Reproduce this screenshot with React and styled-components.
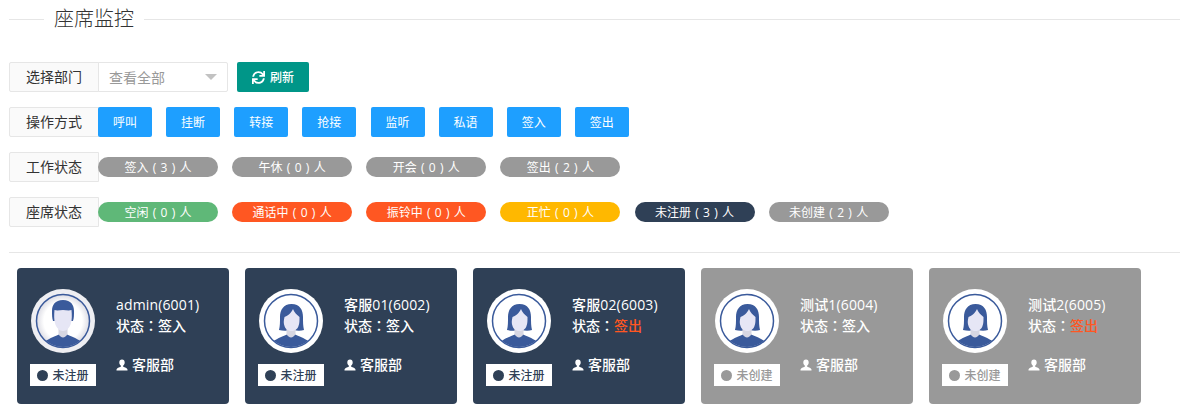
import React from 'react'
import styled, { createGlobalStyle } from 'styled-components'
import { FaSync } from 'react-icons/fa'

const GlobalStyle = createGlobalStyle`
    html, body {
        margin: 0;
        padding: 0;
        background: #fff;
        font-family: "Open Sans", "Noto Sans CJK SC", sans-serif;
        color: #333;
    }
`

const Page = styled.div`
    width: 1180px;
    height: 418px;
    padding-left: 9px;
    box-sizing: border-box;
    overflow: hidden;
`

const TitleBar = styled.div`
    display: flex;
    align-items: center;
    gap: 10px;
    height: 38px;
    margin-bottom: 24px;

    &::before {
        content: '';
        width: 35px;
        height: 1px;
        background: #e6e6e6;
    }

    &::after {
        content: '';
        flex: 1;
        height: 1px;
        background: #e6e6e6;
    }
`

const Title = styled.h2`
    margin: 0;
    font-size: 20px;
    font-weight: 300;
    line-height: 28px;
    color: #333;
`

const Row = styled.div`
    display: flex;
    align-items: center;
    height: 30px;
    margin-bottom: 15px;
`

const Label = styled.div`
    width: 90px;
    height: 30px;
    box-sizing: border-box;
    border: 1px solid #e6e6e6;
    border-radius: 2px 0 0 2px;
    background: #fafafa;
    font-size: 14px;
    line-height: 27px;
    text-align: center;
    color: #333;
    flex: none;
`

const Select = styled.div`
    display: flex;
    align-items: center;
    justify-content: space-between;
    width: 130px;
    height: 30px;
    box-sizing: border-box;
    margin-left: -1px;
    padding: 0 10px;
    border: 1px solid #e6e6e6;
    border-radius: 0 2px 2px 0;
    font-size: 14px;
    color: #999;
`

const Caret = styled.span`
    width: 0;
    height: 0;
    border-style: solid;
    border-width: 6px 6px 0;
    border-color: #c2c2c2 transparent transparent;
`

const Refresh = styled.button`
    display: flex;
    align-items: center;
    justify-content: center;
    gap: 5px;
    width: 72px;
    height: 30px;
    margin-left: 9px;
    padding: 0;
    border: 0;
    border-radius: 2px;
    background: #009688;
    color: #fff;
    font-family: inherit;
    font-size: 12px;
    font-weight: 500;
`

const Actions = styled.div`
    display: flex;
    gap: 14.14px;
    margin-left: -1px;
`

const ActionButton = styled.button`
    width: 54px;
    height: 30px;
    padding: 0;
    border: 0;
    border-radius: 2px;
    background: #1e9fff;
    color: #fff;
    font-family: inherit;
    font-size: 12px;
`

const Pills = styled.div`
    display: flex;
    gap: 14.14px;
    margin-left: -1px;
`

const Pill = styled.div`
    width: 120px;
    height: 20px;
    border-radius: 10px;
    background: ${p => p.$color};
    color: #fff;
    font-size: 12px;
    line-height: 21px;
    word-spacing: 1.2px;
    text-align: center;
`

const Divider = styled.hr`
    height: 1px;
    margin: 25px 0 15px;
    border: 0;
    background: #e6e6e6;
`

const Cards = styled.div`
    display: flex;
    gap: 16px;
    padding-left: 8px;
`

const Card = styled.div`
    display: flex;
    width: 212px;
    height: 136px;
    box-sizing: border-box;
    padding: 21px 0 0 13px;
    border-radius: 4px;
    background: ${p => (p.$off ? '#999999' : '#2f4056')};
    color: #fff;
`

const Side = styled.div`
    display: flex;
    flex-direction: column;
    align-items: center;
    width: 66px;
    flex: none;
`

const AvatarRing = styled.svg`
    display: block;
    width: 64px;
    height: 64px;
    margin-bottom: 11px;
`

const Badge = styled.div`
    display: flex;
    align-items: center;
    justify-content: center;
    gap: 4px;
    width: 66px;
    height: 22px;
    background: #fff;
    color: ${p => (p.$off ? '#999999' : '#2f4056')};
    font-size: 12px;
    font-weight: 500;
`

const Dot = styled.span`
    width: 11px;
    height: 11px;
    border-radius: 50%;
    background: currentColor;
`

const Info = styled.div`
    display: flex;
    flex-direction: column;
    margin-left: 20px;
    padding-top: 5px;
    font-size: 14px;
    font-weight: 500;
    line-height: 21px;
`

const Name = styled.div`
    letter-spacing: 0.15px;
`

const Colon = styled.span`
    font-family: "Noto Sans CJK TC", sans-serif;
`

const Warn = styled.span`
    color: #ff5722;
`

const Dept = styled.div`
    display: flex;
    align-items: center;
    gap: 4px;
    margin-top: 18px;
`

const Avatar = ({ female, soft }) => (
    <AvatarRing viewBox="0 0 64 64">
        <defs>
            <clipPath id="inner">
                <circle cx="32" cy="32" r="26" />
            </clipPath>
            <radialGradient id="softFill" cx="50%" cy="50%" r="50%">
                <stop offset="72%" stopColor="#fff" />
                <stop offset="100%" stopColor="#dcdce4" />
            </radialGradient>
        </defs>
        <circle cx="32" cy="32" r="32" fill={soft ? '#eeeef2' : '#fff'} />
        <circle cx="32" cy="32" r="26.5" fill={soft ? 'url(#softFill)' : '#fff'} stroke="#3a5a9b" strokeWidth="1.5" />
        <g clipPath="url(#inner)">
            {female ? (
                <path
                    d="M32.500 15c-8 0-11.500 6-11.500 13 0 5 0 9-1 13 4 1 8 1 10 0h5c3 1 7 1 10 0-1-4-1-8-1-13 0-7-3-13-11.500-13z"
                    fill="#3a5a9b"
                />
            ) : (
                <path
                    d="M32 11c-8 0-11 5-11 11 0 4 0 7 1 10h3V22h14v10h3c1-3 1-6 1-10 0-6-3-11-11-11z"
                    fill="#3a5a9b"
                />
            )}
            <path d="M10 58c3-7 10-9 19-13h6c9 4 16 6 19 13v6H10z" fill="#3a5a9b" />
            <path d="M27.500 36h9v9c-1 2-3 3.500-4.500 3.500s-3.500-1.500-4.500-3.500z" fill="#d6d6e2" />
            <path
                d={female
                    ? 'M25.500 28c3-1 6-3 8.500-8 1 3 4 6 6.500 8 0 4 0 6-1 9-1 3.500-4 5-7 5s-6-1.500-7-5c-1-3-1-5 0-9z'
                    : 'M23.500 21c3 1 5.500 0 8.500 0s5.500 1 8.500 0c0.500 5 0.500 10-0.500 13-1 4.500-4.500 8-8 8s-7-3.500-8-8c-1-3-1-8-0.500-13z'}
                fill="#e6e6f5"
            />
        </g>
    </AvatarRing>
)

const UserIcon = () => (
    <svg width="12" height="12" viewBox="0 0 12 12">
        <path d="M6 0.500c-1.800 0-2.700 1.300-2.700 3 0 1.300 0.600 2.500 1.500 3.100v1.100C3 8.300 1 8.900 0.500 10.500v1h11v-1c-0.500-1.600-2.500-2.200-4.300-2.800V6.600c0.900-0.600 1.500-1.800 1.500-3.100 0-1.700-0.900-3-2.700-3z" fill="#fff" />
    </svg>
)

const actions = ['呼叫', '挂断', '转接', '抢接', '监听', '私语', '签入', '签出']

const workStates = ['签入 ( 3 ) 人', '午休 ( 0 ) 人', '开会 ( 0 ) 人', '签出 ( 2 ) 人']

const seatStates = [
    { text: '空闲 ( 0 ) 人', color: '#5fb878' },
    { text: '通话中 ( 0 ) 人', color: '#ff5722' },
    { text: '振铃中 ( 0 ) 人', color: '#ff5722' },
    { text: '正忙 ( 0 ) 人', color: '#ffb800' },
    { text: '未注册 ( 3 ) 人', color: '#2f4056' },
    { text: '未创建 ( 2 ) 人', color: '#999999' },
]

const seats = [
    { name: 'admin(6001)', state: '签入', female: false },
    { name: '客服01(6002)', state: '签入', female: true },
    { name: '客服02(6003)', state: '签出', female: true },
    { name: '测试1(6004)', state: '签入', female: true, off: true },
    { name: '测试2(6005)', state: '签出', female: true, off: true },
]

const App = () => (
    <Page>
        <GlobalStyle />
        <TitleBar>
            <Title>座席监控</Title>
        </TitleBar>

        <Row>
            <Label>选择部门</Label>
            <Select>
                查看全部
                <Caret />
            </Select>
            <Refresh>
                <FaSync size={13} />
                刷新
            </Refresh>
        </Row>

        <Row>
            <Label>操作方式</Label>
            <Actions>
                {actions.map(a => <ActionButton key={a}>{a}</ActionButton>)}
            </Actions>
        </Row>

        <Row>
            <Label>工作状态</Label>
            <Pills>
                {workStates.map(s => <Pill key={s} $color="#999999">{s}</Pill>)}
            </Pills>
        </Row>

        <Row>
            <Label>座席状态</Label>
            <Pills>
                {seatStates.map(s => <Pill key={s.text} $color={s.color}>{s.text}</Pill>)}
            </Pills>
        </Row>

        <Divider />

        <Cards>
            {seats.map((s, i) => (
                <Card key={s.name} $off={s.off}>
                    <Side>
                        <Avatar female={s.female} soft={i === 0} />
                        <Badge $off={s.off}>
                            <Dot />
                            {s.off ? '未创建' : '未注册'}
                        </Badge>
                    </Side>
                    <Info>
                        <Name>{s.name}</Name>
                        <div>
                            状态<Colon>：</Colon>{s.state === '签出' ? <Warn>{s.state}</Warn> : s.state}
                        </div>
                        <Dept>
                            <UserIcon />
                            客服部
                        </Dept>
                    </Info>
                </Card>
            ))}
        </Cards>
    </Page>
)

export default App
